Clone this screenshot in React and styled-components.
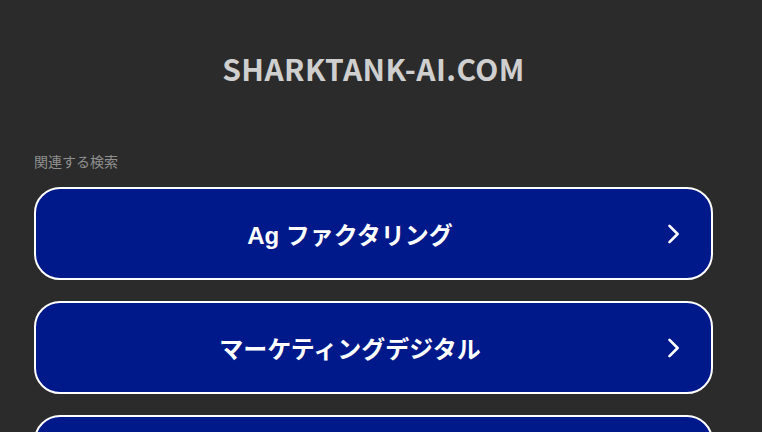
import React from "react";
import styled, { createGlobalStyle } from "styled-components";

const GlobalStyle = createGlobalStyle`
  html, body {
    margin: 0;
    padding: 0;
    background: #2b2b2b;
  }
  body {
    font-family: "Liberation Sans", Arial, "Noto Sans CJK JP", sans-serif;
  }
`;

const searches = [
  "Ag ファクタリング",
  "マーケティングデジタル",
  "オンライン広告",
  "ビジネスローン",
  "クラウド会計",
];

const App = () => {
  return (
    <>
      <GlobalStyle />
      <Page>
        <Header>
          <SiteTitle>SHARKTANK-AI.COM</SiteTitle>
        </Header>
        <Related>
          <RelatedLabel>関連する検索</RelatedLabel>
          <LinkList>
            {searches.map((s) => (
              <SearchLink key={s} href="#">
                <LinkText>{s}</LinkText>
                <Chevron viewBox="0 0 20 20" aria-hidden="true">
                  <path
                    d="M5.5 1.8 L13.6 10 L5.5 18.2"
                    fill="none"
                    stroke="#fff"
                    strokeWidth="2.6"
                    strokeLinecap="round"
                    strokeLinejoin="round"
                  />
                </Chevron>
              </SearchLink>
            ))}
          </LinkList>
        </Related>
      </Page>
    </>
  );
};

// right side leaves room for the 15px browser scrollbar seen in the shot
const Page = styled.div`
  padding: 0 49px 75px 34px;
  background: #2b2b2b;
`;

const Header = styled.header`
  display: flex;
  justify-content: center;
  padding-top: 49px;
`;

const SiteTitle = styled.h1`
  margin: 0;
  font-family: "Noto Sans CJK JP", "Noto Sans", sans-serif;
  font-size: 30px;
  line-height: 38px;
  font-weight: 700;
  color: #cfcfcf;
  letter-spacing: 0.4px;
`;

const Related = styled.section`
  margin-top: 64px;
`;

const RelatedLabel = styled.div`
  font-family: "Noto Sans CJK JP", sans-serif;
  font-size: 14px;
  line-height: 20px;
  color: #8f8f8f;
  margin-bottom: 16px;
`;

const LinkList = styled.div`
  display: flex;
  flex-direction: column;
  gap: 21px;
`;

const SearchLink = styled.a`
  display: flex;
  align-items: center;
  height: 93px;
  box-sizing: border-box;
  border: 2px solid #ffffff;
  border-radius: 26px;
  background: #00198a;
  color: #ffffff;
  text-decoration: none;
  padding-right: 27px;
`;

const LinkText = styled.span`
  flex: 1;
  text-align: center;
  font-size: 24px;
  font-weight: 700;
`;

const Chevron = styled.svg`
  width: 20px;
  height: 20px;
  flex-shrink: 0;
`;

export default App;
